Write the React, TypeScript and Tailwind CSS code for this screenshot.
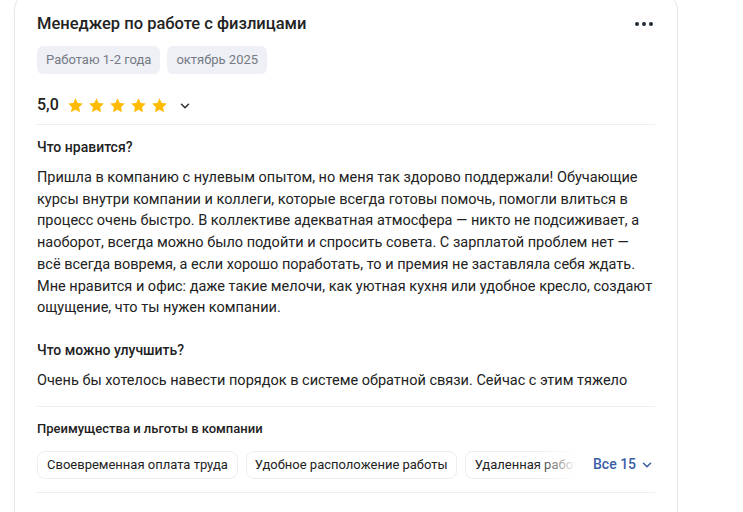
import React from "react";

const Star = () => (
  <svg width="17" height="17" viewBox="0 0 24 24" className="shrink-0">
    <path
      d="M12 1.8l3.1 6.6 7.2.9-5.3 5 1.4 7.2L12 18l-6.4 3.5 1.4-7.2-5.3-5 7.2-.9z"
      fill="#FFBB00"
    />
  </svg>
);

const Chevron = ({ color = "#333", size = 14 }: { color?: string; size?: number }) => (
  <svg width={size} height={size} viewBox="0 0 16 16" fill="none">
    <path d="M4 6l4 4 4-4" stroke={color} strokeWidth="1.8" strokeLinecap="round" strokeLinejoin="round" />
  </svg>
);

export default function App() {
  return (
    <div
      className="w-[743px] h-[512px] overflow-hidden bg-white text-[#222]"
      style={{ fontFamily: "Roboto, 'Noto Sans', sans-serif" }}
    >
      <div className="ml-[14px] mt-[-8px] w-[664px] rounded-[18px] border border-[#e5e7eb] bg-white px-[22px] pt-[19px]">
        <div className="flex items-center justify-between">
          <h2 className="text-[16.5px] font-medium leading-[24px] text-[#222]">Менеджер по работе с физлицами</h2>
          <div className="mr-[2px] flex gap-[3px]">
            <span className="h-[4px] w-[4px] rounded-full bg-[#1f2937]" />
            <span className="h-[4px] w-[4px] rounded-full bg-[#1f2937]" />
            <span className="h-[4px] w-[4px] rounded-full bg-[#1f2937]" />
          </div>
        </div>
        <div className="mt-[10px] flex gap-[7px]">
          <span className="flex h-[28px] items-center rounded-[6px] bg-[#eef0f5] px-[9px] text-[13px] text-[#757a85]">Работаю 1-2 года</span>
          <span className="flex h-[28px] items-center rounded-[6px] bg-[#eef0f5] px-[9px] text-[13px] text-[#757a85]">октябрь 2025</span>
        </div>
        <div className="mt-[20px] flex items-center">
          <span className="text-[16px] font-medium leading-[22px]">5,0</span>
          <div className="ml-[8px] flex gap-[4px]">
            <Star />
            <Star />
            <Star />
            <Star />
            <Star />
          </div>
          <span className="ml-[10px] mt-[1px]">
            <Chevron />
          </span>
        </div>
        <div className="mt-[8px] h-px bg-[#eeeff2]" />
        <h3 className="mt-[13px] text-[14px] font-medium leading-[18px]">Что нравится?</h3>
        <p className="mt-[11px] text-[14.5px] leading-[21.7px] text-[#222]">
          Пришла в компанию с нулевым опытом, но меня так здорово поддержали! Обучающие курсы внутри компании и коллеги, которые всегда готовы помочь, помогли влиться в процесс очень быстро. В коллективе адекватная атмосфера — никто не подсиживает, а наоборот, всегда можно было подойти и спросить совета. С зарплатой проблем нет — всё всегда вовремя, а если хорошо поработать, то и премия не заставляла себя ждать. Мне нравится и офис: даже такие мелочи, как уютная кухня или удобное кресло, создают ощущение, что ты нужен компании.
        </p>
        <h3 className="mt-[22px] text-[14px] font-medium leading-[18px]">Что можно улучшить?</h3>
        <p className="mt-[11px] text-[14.5px] leading-[21.7px] text-[#222]">
          Очень бы хотелось навести порядок в системе обратной связи. Сейчас с этим тяжело
        </p>
        <div className="mt-[14px] h-px bg-[#eeeff2]" />
        <h4 className="mt-[13px] text-[13px] font-medium leading-[18px]">Преимущества и льготы в компании</h4>
        <div className="mt-[13px] flex items-center">
          <div className="relative flex w-[540px] shrink-0 gap-[8px] overflow-hidden">
            <span className="flex h-[28px] shrink-0 items-center whitespace-nowrap rounded-[8px] border border-[#eceef2] px-[9px] text-[13px]">Своевременная оплата труда</span>
            <span className="flex h-[28px] shrink-0 items-center whitespace-nowrap rounded-[8px] border border-[#eceef2] px-[8px] text-[13px]">Удобное расположение работы</span>
            <span className="flex h-[28px] shrink-0 items-center whitespace-nowrap rounded-[8px] border border-[#eceef2] px-[9px] text-[13px]">Удаленная работа</span>
            <div className="absolute right-0 top-0 h-full w-[40px] bg-gradient-to-r from-white/0 to-white" />
          </div>
          <span className="ml-[16px] whitespace-nowrap text-[14px] font-medium text-[#3b5ea8]">Все 15</span>
          <span className="ml-[4px] mt-[1px]">
            <Chevron color="#3b5ea8" size={14} />
          </span>
        </div>
        <div className="mt-[13px] h-px bg-[#eeeff2]" />
        <div className="h-[40px]" />
      </div>
    </div>
  );
}
